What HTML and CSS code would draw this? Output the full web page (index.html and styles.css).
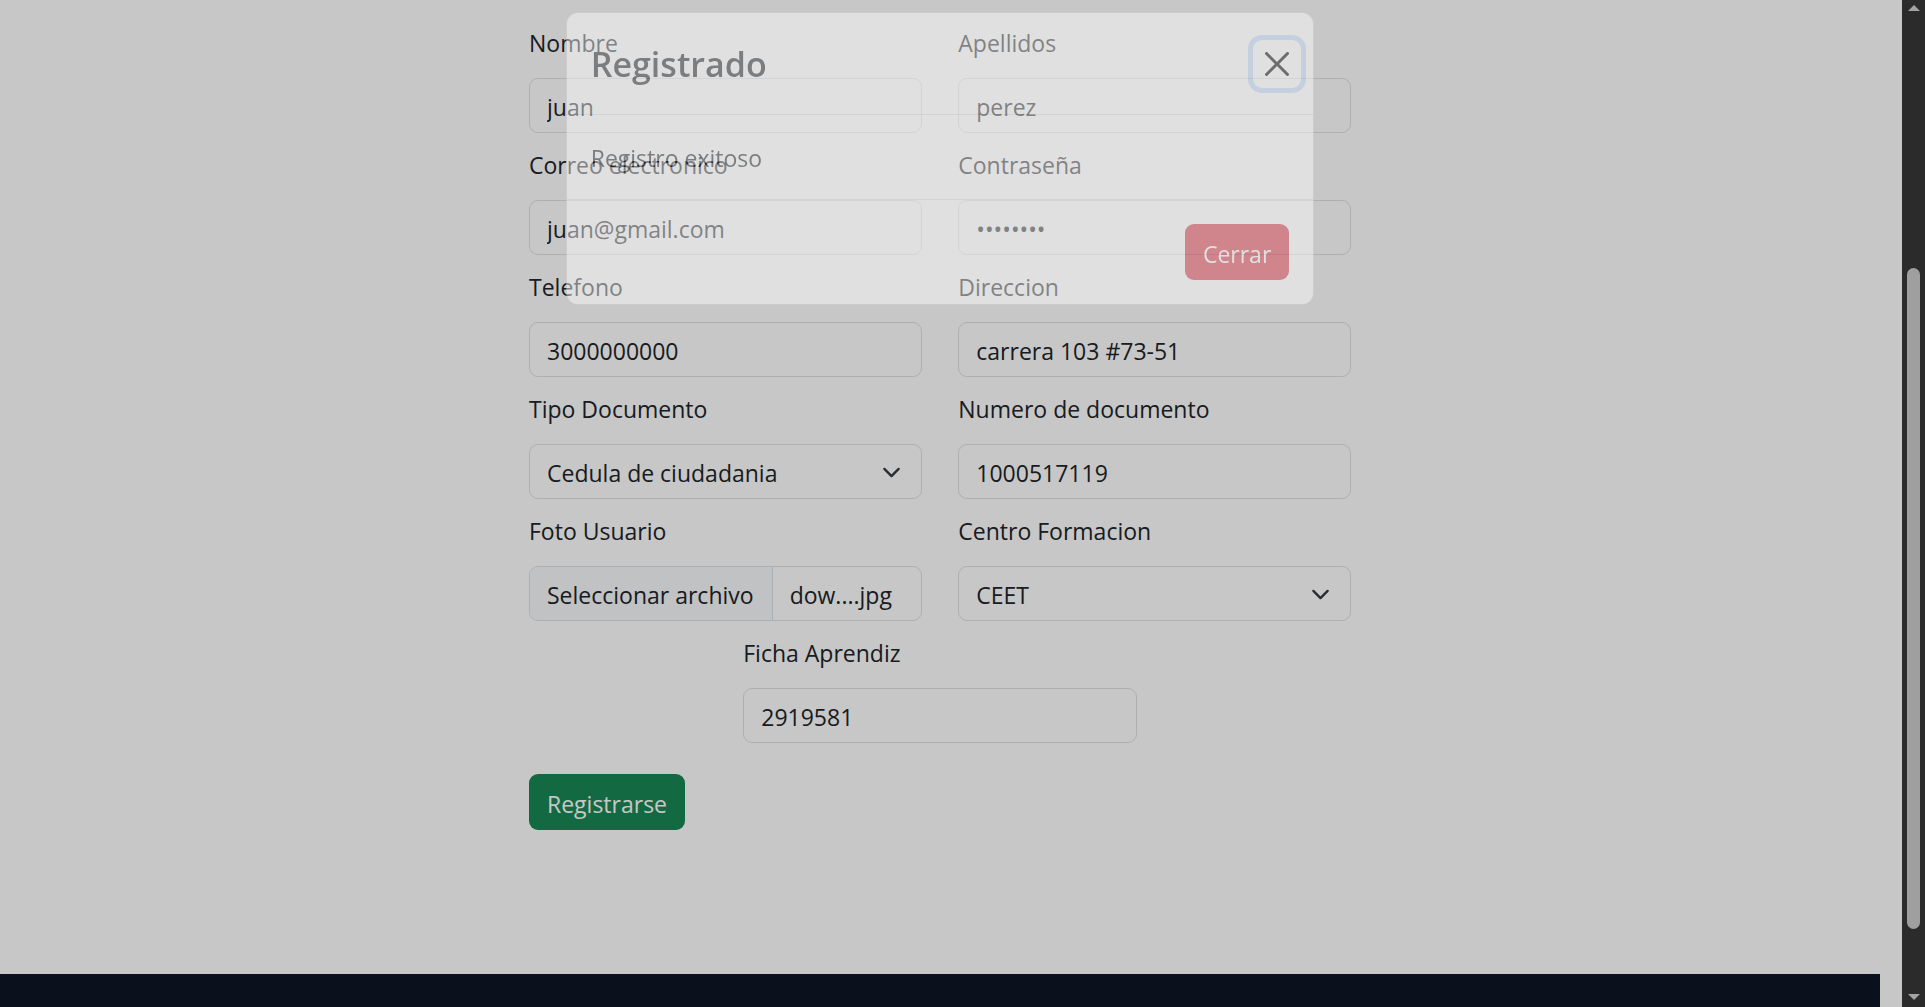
FILE: index.html
```html
<!DOCTYPE html>
<html lang="es">
<head>
<meta charset="utf-8">
<title>Registro</title>
<link rel="stylesheet" href="styles.css">
</head>
<body>
  <main class="page">
    <form class="form">
      <div class="grid">
        <div class="field">
          <label class="label" for="nombre">Nombre</label>
          <input class="control" id="nombre" type="text" value="juan">
        </div>
        <div class="field">
          <label class="label" for="apellidos">Apellidos</label>
          <input class="control" id="apellidos" type="text" value="perez">
        </div>
        <div class="field">
          <label class="label" for="correo">Correo electronico</label>
          <input class="control" id="correo" type="text" value="juan@gmail.com">
        </div>
        <div class="field">
          <label class="label" for="clave">Contraseña</label>
          <input class="control" id="clave" type="password" value="12345678">
        </div>
        <div class="field">
          <label class="label" for="telefono">Telefono</label>
          <input class="control" id="telefono" type="text" value="3000000000">
        </div>
        <div class="field">
          <label class="label" for="direccion">Direccion</label>
          <input class="control" id="direccion" type="text" value="carrera 103 #73-51">
        </div>
        <div class="field">
          <span class="label">Tipo Documento</span>
          <div class="control select">
            <span>Cedula de ciudadania</span>
            <svg class="chevron" viewBox="0 0 16 16" width="19" height="19"><path d="m2 5 6 6 6-6" fill="none" stroke="#343a40" stroke-width="2" stroke-linecap="round" stroke-linejoin="round"/></svg>
          </div>
        </div>
        <div class="field">
          <label class="label" for="documento">Numero de documento</label>
          <input class="control" id="documento" type="text" value="1000517119">
        </div>
        <div class="field">
          <span class="label">Foto Usuario</span>
          <div class="control file">
            <span class="file-btn">Seleccionar archivo</span>
            <span class="file-name">dow....jpg</span>
          </div>
        </div>
        <div class="field">
          <span class="label">Centro Formacion</span>
          <div class="control select">
            <span>CEET</span>
            <svg class="chevron" viewBox="0 0 16 16" width="19" height="19"><path d="m2 5 6 6 6-6" fill="none" stroke="#343a40" stroke-width="2" stroke-linecap="round" stroke-linejoin="round"/></svg>
          </div>
        </div>
      </div>
      <div class="center-row">
        <div class="field">
          <label class="label" for="ficha">Ficha Aprendiz</label>
          <input class="control" id="ficha" type="text" value="2919581">
        </div>
      </div>
      <button class="btn btn-success" type="button">Registrarse</button>
    </form>
  </main>
  <footer class="site-footer"></footer>

  <div class="backdrop"></div>

  <div class="modal">
    <div class="modal-dialog">
      <div class="modal-content">
        <div class="modal-header">
          <h4 class="modal-title">Registrado</h4>
          <button class="btn-close" type="button" aria-label="Close">
            <svg viewBox="0 0 16 16" width="24" height="24"><path d="M.293.293a1 1 0 0 1 1.414 0L8 6.586 14.293.293a1 1 0 1 1 1.414 1.414L9.414 8l6.293 6.293a1 1 0 0 1-1.414 1.414L8 9.414l-6.293 6.293a1 1 0 0 1-1.414-1.414L6.586 8 .293 1.707a1 1 0 0 1 0-1.414z" fill="#000"/></svg>
          </button>
        </div>
        <div class="modal-body">Registro exitoso</div>
        <div class="modal-footer">
          <button class="btn btn-danger" type="button">Cerrar</button>
        </div>
      </div>
    </div>
  </div>

  <div class="scrollbar">
    <svg class="arrow" viewBox="0 0 12 6" width="12" height="6"><path d="M0 6 6 0 12 6z" fill="#a3a3a3"/></svg>
    <div class="track"><div class="thumb"></div></div>
    <svg class="arrow" viewBox="0 0 12 6" width="12" height="6"><path d="M0 0 6 6 12 0z" fill="#a3a3a3"/></svg>
  </div>
</body>
</html>
```

FILE: styles.css
```css
html, body {
  margin: 0;
  height: 100%;
  overflow: hidden;
}

body {
  box-sizing: border-box;
  padding-right: 45px;
  background: #fff;
  color: #212529;
  font-family: "Open Sans", "Noto Sans", sans-serif;
  font-size: 23px;
  display: flex;
  flex-direction: column;
}

.page {
  flex: 1;
  padding-top: 25px;
}

.form {
  width: 822px;
  margin: 0 auto;
}

.grid {
  display: grid;
  grid-template-columns: 1fr 1fr;
  column-gap: 36.6px;
}

.center-row {
  display: flex;
  justify-content: center;
}

.center-row .field {
  width: 393.5px;
}

.field {
  margin-bottom: 14px;
}

.label {
  display: block;
  height: 36px;
  line-height: 36px;
  margin-bottom: 17px;
}

.control {
  box-sizing: border-box;
  display: block;
  width: 100%;
  height: 55px;
  margin: 0;
  padding: 2px 17px 0;
  border: 1px solid #dee2e6;
  border-radius: 9px;
  background: #fff;
  color: #212529;
  font: inherit;
  outline: none;
}

.select {
  display: flex;
  align-items: center;
  justify-content: space-between;
  padding-right: 20px;
}

.chevron {
  display: block;
  flex: none;
}

.file {
  display: flex;
  align-items: stretch;
  padding: 0;
  overflow: hidden;
}

.file-btn {
  display: flex;
  align-items: center;
  padding: 2px 18px 0 17px;
  background: #f8f9fa;
  border-right: 1px solid #dee2e6;
}

.file-name {
  display: flex;
  align-items: center;
  padding: 2px 17px 0;
}

.btn {
  box-sizing: border-box;
  height: 56px;
  padding: 3px 17px 0;
  border: 1px solid transparent;
  border-radius: 9px;
  color: #fff;
  font: inherit;
  cursor: pointer;
}

.btn-success {
  margin-top: 17px;
  background: #198754;
}

.btn-danger {
  margin: 6px;
  background: #dc3545;
}

.site-footer {
  height: 33px;
  background: #0f1625;
}

.backdrop {
  position: fixed;
  top: 0;
  left: 0;
  bottom: 0;
  right: 23px;
  background: #000;
  opacity: 0.22;
  z-index: 10;
}

.modal {
  position: fixed;
  top: 0;
  left: 0;
  width: 1880px;
  z-index: 20;
}

.modal-dialog {
  width: 748.6px;
  margin: 12px auto 0;
  opacity: 0.45;
}

.modal-content {
  background: #fff;
  border: 1px solid rgba(0, 0, 0, 0.175);
  border-radius: 12px;
}

.modal-header {
  display: flex;
  align-items: center;
  padding: 24px 24px 23px;
  border-bottom: 1px solid #dee2e6;
}

.modal-title {
  margin: 0;
  font-size: 34px;
  font-weight: 600;
  line-height: 54px;
}

.btn-close {
  box-sizing: content-box;
  display: flex;
  width: 24px;
  height: 24px;
  padding: 12px;
  margin: -12px -12px -12px auto;
  border: 0;
  border-radius: 9px;
  background: transparent;
  box-shadow: 0 0 0 5px rgba(13, 110, 253, 0.25);
}

.modal-body {
  padding: 25px 24px 23px;
  line-height: 36px;
}

.modal-footer {
  display: flex;
  justify-content: flex-end;
  padding: 18px;
  border-top: 1px solid #dee2e6;
}

.scrollbar {
  position: fixed;
  top: 0;
  right: 0;
  bottom: 0;
  width: 23px;
  background: #2b2b2b;
  z-index: 30;
  display: flex;
  flex-direction: column;
  align-items: center;
  padding: 5px 0 7px;
  box-sizing: border-box;
}

.arrow {
  display: block;
  flex: none;
}

.track {
  flex: 1;
  width: 100%;
  display: flex;
  justify-content: center;
}

.thumb {
  width: 13px;
  height: 661px;
  margin-top: 257px;
  border-radius: 7px;
  background: #9f9f9f;
}
```
